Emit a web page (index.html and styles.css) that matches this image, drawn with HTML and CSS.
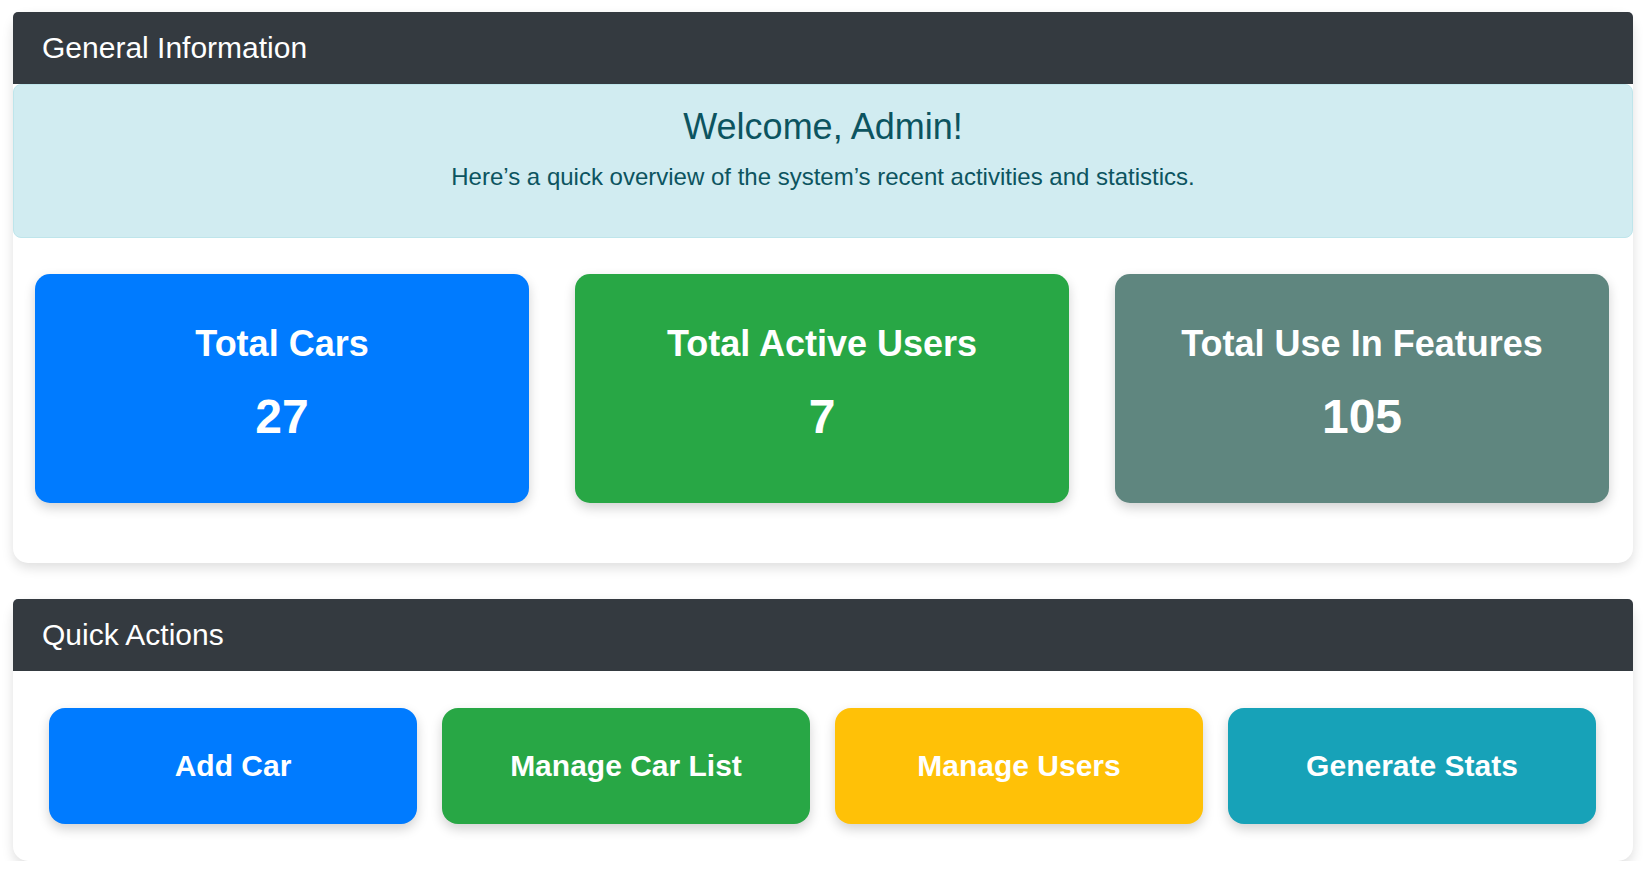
FILE: index.html
```html
<!DOCTYPE html>
<html lang="en">
<head>
<meta charset="utf-8">
<title>Admin Dashboard</title>
<link rel="stylesheet" href="styles.css">
</head>
<body>
  <section class="panel">
    <div class="panel-header"><h4>General Information</h4></div>
    <div class="alert">
      <h2 class="welcome">Welcome, Admin!</h2>
      <p class="lead">Here’s a quick overview of the system’s recent activities and statistics.</p>
    </div>
    <div class="stats">
      <div class="stat stat-blue">
        <h3 class="stat-title">Total Cars</h3>
        <div class="stat-value">27</div>
      </div>
      <div class="stat stat-green">
        <h3 class="stat-title">Total Active Users</h3>
        <div class="stat-value">7</div>
      </div>
      <div class="stat stat-gray">
        <h3 class="stat-title">Total Use In Features</h3>
        <div class="stat-value">105</div>
      </div>
    </div>
  </section>

  <section class="panel">
    <div class="panel-header"><h4>Quick Actions</h4></div>
    <div class="actions">
      <a class="action action-blue" href="#">Add Car</a>
      <a class="action action-green" href="#">Manage Car List</a>
      <a class="action action-yellow" href="#">Manage Users</a>
      <a class="action action-teal" href="#">Generate Stats</a>
    </div>
  </section>
</body>
</html>
```

FILE: styles.css
```css
* { box-sizing: border-box; }

body {
  margin: 0;
  padding: 12px 10px 0 13px;
  background: #ffffff;
  font-family: "Liberation Sans", Arial, sans-serif;
}

h2, h3, h4, p { margin: 0; font-weight: normal; }

.panel {
  background: #ffffff;
  border-radius: 15px;
  box-shadow: 0 5px 12px rgba(0, 0, 0, 0.13);
}

.panel + .panel { margin-top: 36px; }

.panel-header {
  background: #343a40;
  color: #ffffff;
  border-radius: 5px 5px 0 0;
  padding: 18px 29px 18px;
}

.panel-header h4 {
  font-size: 30px;
  line-height: 36px;
}

.alert {
  background: #d1ecf1;
  color: #0c5460;
  border: 1px solid #bee5eb;
  border-radius: 8px;
  text-align: center;
  padding: 20px 20px 42px;
}

.welcome {
  font-size: 36px;
  line-height: 43px;
  margin-bottom: 11px;
}

.lead {
  font-size: 24px;
  line-height: 36px;
}

.stats {
  display: grid;
  grid-template-columns: repeat(3, 1fr);
  gap: 46px;
  padding: 36px 24px 60px 22px;
}

.stat {
  height: 229px;
  border-radius: 15px;
  color: #ffffff;
  text-align: center;
  padding-top: 48px;
  box-shadow: 0 5px 12px rgba(0, 0, 0, 0.18);
}

.stat-title {
  font-size: 36px;
  line-height: 43px;
  font-weight: bold;
  margin-bottom: 23px;
}

.stat-value {
  font-size: 48px;
  line-height: 58px;
  font-weight: bold;
}

.stat-blue { background: #007bff; }
.stat-green { background: #28a745; }
.stat-gray { background: #5f867f; }

.actions {
  display: grid;
  grid-template-columns: repeat(4, 1fr);
  gap: 25px;
  padding: 37px 37px 37px 36px;
}

.action {
  height: 116px;
  border-radius: 16px;
  display: flex;
  align-items: center;
  justify-content: center;
  color: #ffffff;
  text-decoration: none;
  font-size: 30px;
  font-weight: bold;
  box-shadow: 0 5px 12px rgba(0, 0, 0, 0.18);
}

.action-blue { background: #007bff; }
.action-green { background: #28a745; }
.action-yellow { background: #ffc107; }
.action-teal { background: #17a2b8; }
```
